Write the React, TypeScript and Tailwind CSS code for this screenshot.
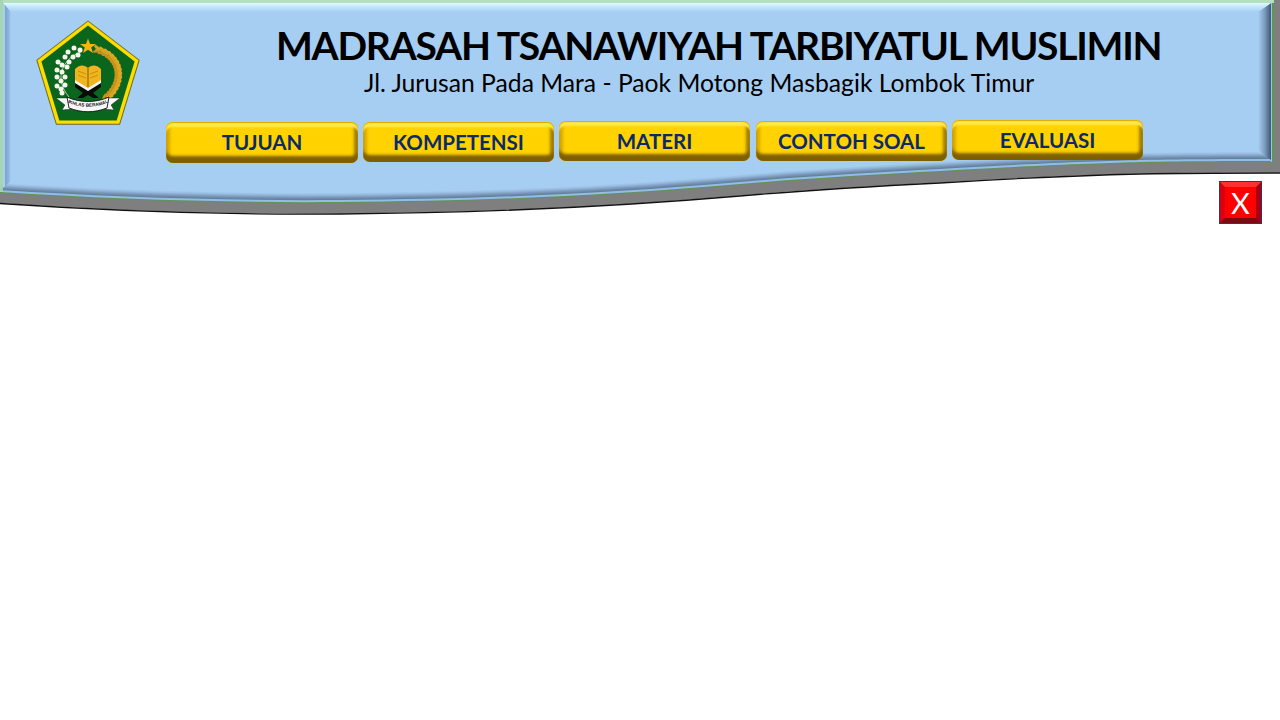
import React from "react";

const wave = (d: number, endX: number) => {
  const y = (v: number) => v + d;
  return `C110,${y(200)} 230,${y(204)} 340,${y(203)} C480,${y(202)} 600,${y(197)} 740,${y(185)} C810,${y(179)} 880,${y(175)} 940,${y(172)} C1020,${y(167)} 1100,${y(164)} 1140,${y(163)} C1190,${y(162)} 1240,${y(162)} ${endX},${y(162)}`;
};

const closedShape = (x0: number, y0: number, x1: number, d: number) =>
  `M0,${193 + d} ${wave(d, x1)} V${y0} H${x0} V${193 + d} Z`;

const bevelSteps = ["#64809f", "#6d8aa9", "#7896b6", "#84a3c5", "#90b1d4", "#9abde1", "#a1c6eb", "#a6cef3"];

function Banner() {
  return (
    <svg className="absolute top-0 left-0" width="1280" height="220" viewBox="0 0 1280 220">
      <defs>
        <linearGradient id="top" x1="0" x2="0" y1="0" y2="1">
          <stop offset="0" stopColor="#e3fbff" />
          <stop offset="0.35" stopColor="#c6ebfb" />
          <stop offset="1" stopColor="#a6cef3" />
        </linearGradient>
        <linearGradient id="left" x1="0" x2="1" y1="0" y2="0">
          <stop offset="0" stopColor="#a9cfee" />
          <stop offset="0.25" stopColor="#a9cfee" />
          <stop offset="0.3" stopColor="#7ea5cc" />
          <stop offset="0.7" stopColor="#8db4dc" />
          <stop offset="1" stopColor="#a6cef3" />
        </linearGradient>
        <linearGradient id="right" x1="0" x2="1" y1="0" y2="0">
          <stop offset="0" stopColor="#a6cef3" />
          <stop offset="0.5" stopColor="#7e9dbf" />
          <stop offset="1" stopColor="#3f5874" />
        </linearGradient>
      </defs>
      <path d={`M0,203 ${wave(10.5, 1280)} V0 H0 Z`} fill="#7f7f7f" />
      <path d={`M0,203.5 ${wave(11, 1280)}`} fill="none" stroke="#111" strokeWidth="1.3" />
      <path d={closedShape(0, 0, 1274, 0)} fill="#5f9455" />
      <rect x="0" y="0" width="1274" height="3" fill="#b4e0bf" />
      <rect x="0" y="0" width="3" height="192" fill="#a5d6b0" />
      <path d={closedShape(3, 3, 1272, -1)} fill="#93bce6" />
      {bevelSteps.map((c, i) => (
        <path key={c} d={closedShape(3, 3, 1270, -3 - i)} fill={c} />
      ))}
      <polygon points="1258,12 1271,3 1271,160 1258,150" fill="url(#right)" />
      <rect x="1271" y="3" width="1" height="159" fill="#9cc4e8" />
      <polygon points="3,3 1271,3 1258,12 11,12" fill="url(#top)" />
      <polygon points="3,3 11,12 11,181 3,188" fill="url(#left)" />
    </svg>
  );
}

const flowers: [number, number][] = [
  [80, 50], [74, 48], [68, 52], [78, 55], [73, 57], [65, 57], [69, 62], [58, 62], [62, 65], [67, 67],
  [57, 70], [62, 72], [65, 77], [57, 77], [61, 81], [65, 85], [57, 86], [61, 89], [62, 93],
];

const bez = (t: number) => {
  const u = 1 - t;
  const b = (a: number, c: number, d: number, e: number) =>
    u * u * u * a + 3 * u * u * t * c + 3 * u * t * t * d + t * t * t * e;
  const x = b(95, 122, 125, 107);
  const y = b(49, 55, 82, 97);
  const dx = 3 * u * u * (122 - 95) + 6 * u * t * (125 - 122) + 3 * t * t * (107 - 125);
  const dy = 3 * u * u * (55 - 49) + 6 * u * t * (82 - 55) + 3 * t * t * (97 - 82);
  return { x, y, a: (Math.atan2(dy, dx) * 180) / Math.PI };
};
const grains = Array.from({ length: 17 }, (_, i) => bez(i / 16));

function Logo() {
  return (
    <svg width="108" height="110" viewBox="34 18 108 110" className="shrink-0">
      <polygon points="88,20.5 139.7,60 120,124.7 56,124.7 36.3,60" fill="#6e6a1a" />
      <polygon points="88,21.6 138.6,60.3 119.3,123.8 56.7,123.8 37.4,60.3" fill="#ffdc00" />
      <polygon points="88,25.6 134.6,61.4 116.7,120.6 59.3,120.6 41.4,61.4" fill="#0b661d" />
      <polygon points="88,38.5 90,44 96,44 91.2,47.5 93,53 88,49.7 83,53 84.8,47.5 80,44 86,44" fill="#f6b612" />
      <path d="M81,52 C68,56 60,68 61,80 C62,87 65,92 69,97" stroke="#a5cf9f" strokeWidth="1" fill="none" />
      {flowers.map(([x, y], i) => (
        <circle key={i} cx={x} cy={y} r="2.5" fill="#f5f5ec" />
      ))}
      {grains.map(({ x, y, a }, i) => (
        <g key={i} transform={`translate(${x} ${y}) rotate(${a})`}>
          <ellipse cx="1" cy="-2.4" rx="3.6" ry="1.5" fill="#dca722" transform="rotate(24)" />
          <ellipse cx="1" cy="2.4" rx="3.6" ry="1.5" fill="#c8921a" transform="rotate(-24)" />
        </g>
      ))}
      <path d="M95,49 C122,55 125,82 107,97" stroke="#e0ae2a" strokeWidth="1" fill="none" />
      <path d="M75,83 L88,91 L101,83 L101,87 L93,93 L99,98 L93,98 L88,95 L83,98 L77,98 L83,93 L75,87 Z" fill="#0b0b0b" />
      <path d="M75,79 L88,87 L101,79 L101,83 L88,91 L75,83 Z" fill="#f4f4f4" />
      <path d="M75,69 C80,64 85,65 88,68 C91,65 96,64 101,69 L101,80 L88,88 L75,80 Z" fill="#f2b41c" />
      <path d="M88,68 L88,87" stroke="#7b5a08" strokeWidth="1" />
      <path d="M78,71 L86,74 M78,75 L86,78 M98,71 L90,74 M98,75 L90,78" stroke="#b98710" strokeWidth="0.8" />
      <path d="M56,98 L70,98 L72,109 L62,110 L65,105 Z" fill="#f8f8f8" stroke="#111" strokeWidth="0.4" />
      <path d="M120,98 L106,98 L104,109 L114,110 L111,105 Z" fill="#f8f8f8" stroke="#111" strokeWidth="0.4" />
      <path d="M67,97 C80,103 96,103 109,97 L107,108 C94,113 82,113 69,108 Z" fill="#f8f8f8" stroke="#111" strokeWidth="0.9" />
      <path id="ribbon" d="M66,101.5 C78,108.5 98,108.5 110,101.5" fill="none" />
      <text fill="#111" fontSize="4.6" fontWeight="700" fontFamily="'Liberation Sans', sans-serif">
        <textPath href="#ribbon" startOffset="50%" textAnchor="middle">IKHLAS BERAMAL</textPath>
      </text>
    </svg>
  );
}

const buttons = [
  { label: "TUJUAN", cls: "mt-[3px] h-[41px] w-[192px]" },
  { label: "KOMPETENSI", cls: "mt-[3px] h-[40px] w-[191px]" },
  { label: "MATERI", cls: "mt-[2px] h-[40px] w-[191px]" },
  { label: "CONTOH SOAL", cls: "mt-[2px] ml-[1px] h-[40px] w-[191px]" },
  { label: "EVALUASI", cls: "mt-[1px] h-[40px] w-[191px]" },
];

export default function App() {
  return (
    <div className="relative h-[720px] w-full overflow-hidden bg-white font-['Lato','Liberation_Sans',sans-serif]">
      <Banner />
      <header className="relative flex h-[181px] items-start pl-[34px] pt-[18px]">
        <Logo />
        <div className="ml-[24px] flex flex-col">
          <h1 className="ml-[110px] h-[46px] text-[39px] font-bold leading-[54px] tracking-[-1.25px] whitespace-nowrap text-black">
            MADRASAH TSANAWIYAH TARBIYATUL MUSLIMIN
          </h1>
          <p className="ml-[198px] mt-[1px] h-[41px] text-[24.7px] leading-[36px] whitespace-nowrap text-black">
            Jl. Jurusan Pada Mara - Paok Motong Masbagik Lombok Timur
          </p>
          <nav className="mt-[13px] flex items-start gap-[5px]">
            {buttons.map((b) => (
              <button
                key={b.label}
                className={`${b.cls} flex items-center justify-center rounded-[7px] bg-[#ffd200] text-[20.5px] font-bold text-[#0c2a68] shadow-[inset_0_1px_1px_#dba800,inset_0_6px_2px_-1px_#ffe94a,inset_0_-8px_3px_-1px_#7f6000,inset_6px_0_3px_-2px_#d9a800,inset_-6px_0_3px_-2px_#a07c00]`}
              >
                {b.label}
              </button>
            ))}
          </nav>
        </div>
      </header>
      <div className="relative flex justify-end pr-[18px]">
        <button className="box-border flex h-[43px] w-[43px] items-center justify-center border-[6px] border-t-[#ff3030] border-r-[#a80012] border-b-[#7c0a14] border-l-[#d80010] bg-[#ff0000] text-[29px] font-normal text-white outline outline-1 -outline-offset-1 outline-[#3a3560]">
          X
        </button>
      </div>
    </div>
  );
}
